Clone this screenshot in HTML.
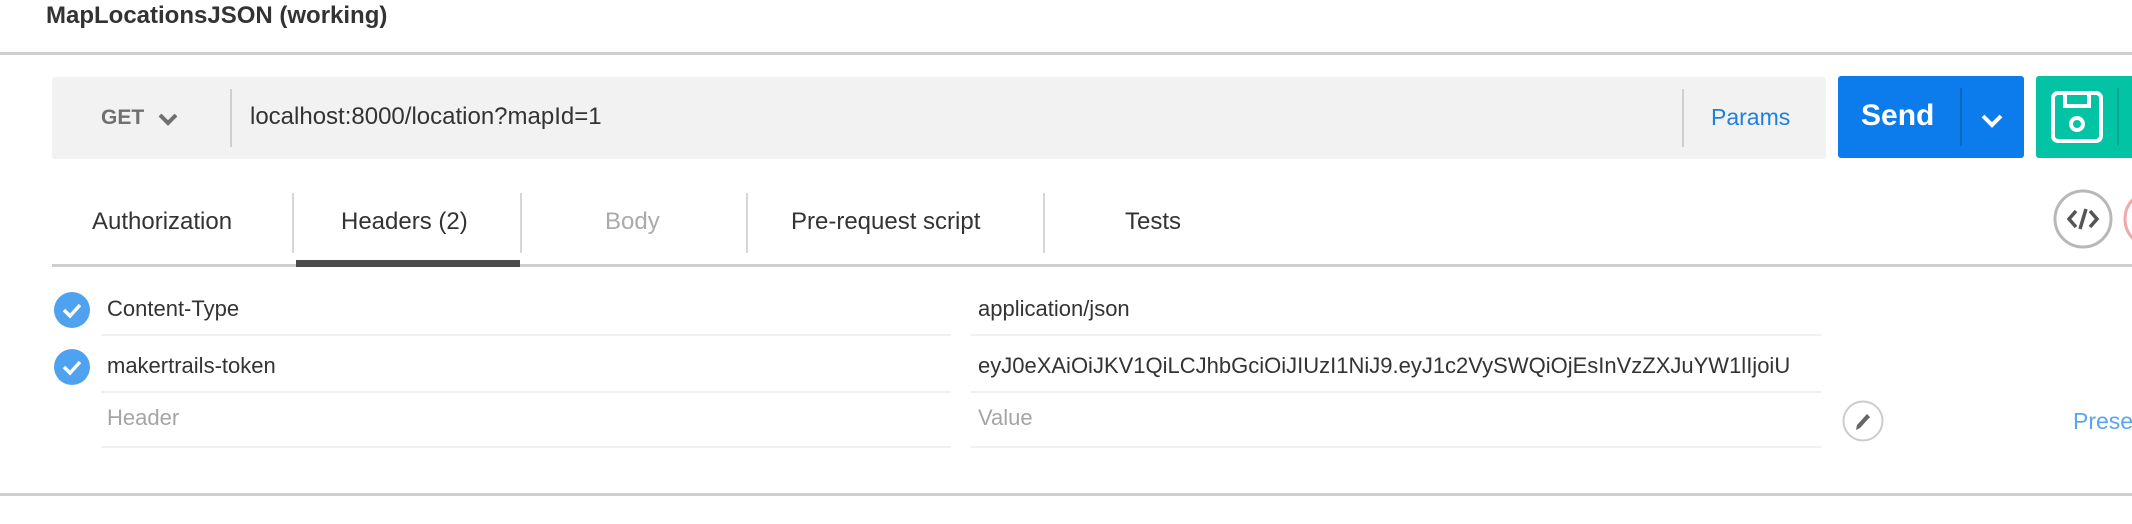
<!DOCTYPE html>
<html><head><meta charset="utf-8"><style>
*{margin:0;padding:0;box-sizing:border-box}
body{width:2132px;height:524px;background:#fff;position:relative;overflow:hidden;font-family:"Liberation Sans",sans-serif;color:#333}
.a{position:absolute;white-space:nowrap}
</style></head><body>
<div class="a" style="left:46px;top:2px;font-size:24px;font-weight:bold;color:#333;line-height:28px">MapLocationsJSON (working)</div>
<div class="a" style="left:0;top:52px;width:2132px;height:3px;background:#cfcfcf"></div>

<div class="a" style="left:52px;top:77px;width:1774px;height:82px;background:#f2f2f2;border-radius:3px"></div>
<div class="a" style="left:101px;top:104px;font-size:21px;font-weight:bold;color:#707070;line-height:28px">GET</div>
<svg class="a" style="left:157px;top:111px" width="22" height="16"><path d="M3 4 L11 12 L19 4" fill="none" stroke="#707070" stroke-width="4"/></svg>
<div class="a" style="left:230px;top:89px;width:2px;height:58px;background:#cfcfcf"></div>
<div class="a" style="left:250px;top:102px;font-size:24px;color:#333;line-height:30px">localhost:8000/location?mapId=1</div>
<div class="a" style="left:1682px;top:89px;width:2px;height:58px;background:#cfcfcf"></div>
<div class="a" style="left:1711px;top:103px;font-size:23px;color:#1e7fe0;line-height:28px">Params</div>

<div class="a" style="left:1838px;top:76px;width:186px;height:82px;background:#0c7beb;border-radius:3px"></div>
<div class="a" style="left:1861px;top:99px;font-size:30px;font-weight:bold;color:#fff;line-height:34px">Send</div>
<div class="a" style="left:1960px;top:88px;width:2px;height:58px;background:#0a66c4"></div>
<svg class="a" style="left:1979px;top:112px" width="26" height="18"><path d="M4 4 L13 13 L22 4" fill="none" stroke="#fff" stroke-width="4"/></svg>
<div class="a" style="left:2036px;top:76px;width:110px;height:82px;background:#02c4a4;border-radius:3px"></div>
<svg class="a" style="left:2050px;top:90px" width="56" height="56"><rect x="3" y="3" width="48" height="48" rx="5" fill="none" stroke="#fff" stroke-width="4"/><path d="M15 3 V16 H39 V3" fill="none" stroke="#fff" stroke-width="4"/><circle cx="27" cy="34" r="6" fill="none" stroke="#fff" stroke-width="4"/></svg>
<div class="a" style="left:2117px;top:88px;width:2px;height:58px;background:#02a88c"></div>

<div class="a" style="left:92px;top:207px;font-size:24px;color:#333;line-height:30px">Authorization</div>
<div class="a" style="left:292px;top:193px;width:2px;height:60px;background:#d6d6d6"></div>
<div class="a" style="left:341px;top:207px;font-size:24px;color:#333;line-height:30px">Headers (2)</div>
<div class="a" style="left:520px;top:193px;width:2px;height:60px;background:#d6d6d6"></div>
<div class="a" style="left:605px;top:207px;font-size:24px;color:#aaa;line-height:30px">Body</div>
<div class="a" style="left:746px;top:193px;width:2px;height:60px;background:#d6d6d6"></div>
<div class="a" style="left:791px;top:207px;font-size:24px;color:#333;line-height:30px">Pre-request script</div>
<div class="a" style="left:1043px;top:193px;width:2px;height:60px;background:#d6d6d6"></div>
<div class="a" style="left:1125px;top:207px;font-size:24px;color:#333;line-height:30px">Tests</div>
<div class="a" style="left:52px;top:264px;width:2080px;height:3px;background:#cfcfcf"></div>
<div class="a" style="left:296px;top:260px;width:224px;height:7px;background:#4a4a4a"></div>
<svg class="a" style="left:2052px;top:188px" width="80" height="64"><circle cx="31" cy="31" r="28" fill="none" stroke="#b8b8b8" stroke-width="3"/><path d="M24 23 L17 31 L24 39 M38 23 L45 31 L38 39 M34 21 L28 41" fill="none" stroke="#555" stroke-width="3.5"/><circle cx="101" cy="31" r="28" fill="none" stroke="#f0a8a8" stroke-width="3"/></svg>

<svg class="a" style="left:54px;top:292px" width="36" height="36"><circle cx="18" cy="18" r="18" fill="#4fa2f0"/><path d="M10 18 L16 24 L26 13" fill="none" stroke="#fff" stroke-width="3.5"/></svg>
<div class="a" style="left:107px;top:295px;font-size:22px;line-height:28px">Content-Type</div>
<div class="a" style="left:978px;top:295px;font-size:22px;line-height:28px">application/json</div>
<div class="a" style="left:101px;top:334px;width:850px;height:2px;background:#f0f0f0"></div>
<div class="a" style="left:971px;top:334px;width:850px;height:2px;background:#f0f0f0"></div>
<svg class="a" style="left:54px;top:349px" width="36" height="36"><circle cx="18" cy="18" r="18" fill="#4fa2f0"/><path d="M10 18 L16 24 L26 13" fill="none" stroke="#fff" stroke-width="3.5"/></svg>
<div class="a" style="left:107px;top:352px;font-size:22px;line-height:28px">makertrails-token</div>
<div class="a" style="left:978px;top:352px;font-size:22px;line-height:28px;width:843px;overflow:hidden">eyJ0eXAiOiJKV1QiLCJhbGciOiJIUzI1NiJ9.eyJ1c2VySWQiOjEsInVzZXJuYW1lIjoiU</div>
<div class="a" style="left:101px;top:391px;width:850px;height:2px;background:#f0f0f0"></div>
<div class="a" style="left:971px;top:391px;width:850px;height:2px;background:#f0f0f0"></div>
<div class="a" style="left:107px;top:404px;font-size:22px;line-height:28px;color:#a5a5a5">Header</div>
<div class="a" style="left:978px;top:404px;font-size:22px;line-height:28px;color:#a5a5a5">Value</div>
<div class="a" style="left:101px;top:446px;width:850px;height:2px;background:#f0f0f0"></div>
<div class="a" style="left:971px;top:446px;width:850px;height:2px;background:#f0f0f0"></div>
<svg class="a" style="left:1842px;top:400px" width="42" height="42"><circle cx="21" cy="21" r="19.5" fill="#fff" stroke="#ccc" stroke-width="2"/><path d="M14 30 L15 25 L25 14 L28 17 L18 28 Z" fill="#666"/></svg>
<div class="a" style="left:2073px;top:407px;font-size:23px;line-height:28px;color:#5aa5f0">Presets</div>
<div class="a" style="left:0;top:493px;width:2132px;height:3px;background:#cfcfcf"></div>
</body></html>
